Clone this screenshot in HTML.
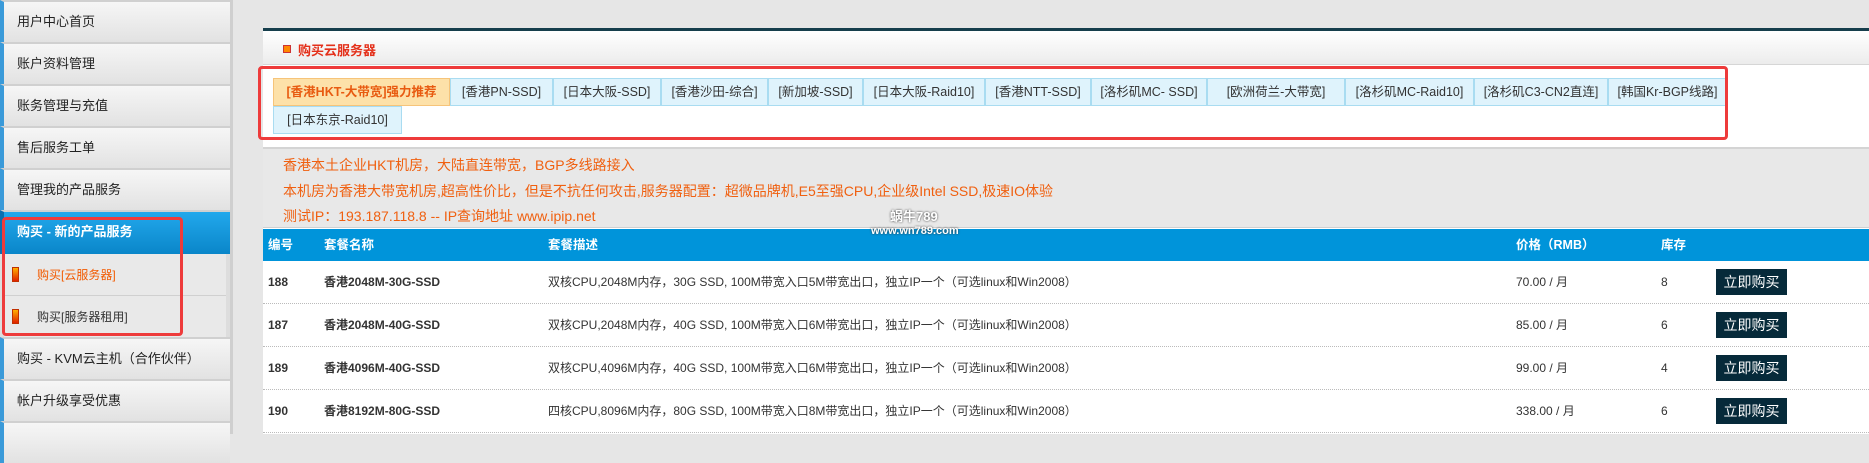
<!DOCTYPE html>
<html><head><meta charset="utf-8"><style>
*{margin:0;padding:0;box-sizing:border-box}
body{width:1869px;height:434px;overflow:hidden;background:#e6e6e6;font-family:"Liberation Sans","Noto Sans CJK SC",sans-serif;position:relative;font-size:13px;color:#333}
.side{position:absolute;left:0;top:0;width:233px;height:434px;background:#ddd;border-right:3px solid #cfcfcf}
.it{position:absolute;left:0;width:230px;height:42px;background:linear-gradient(#f6f6f6,#e2e2e2);border-top:2px solid #d0d0d0;border-left:4px solid #3a9ad9;padding-left:13px;line-height:40px;font-size:13px;color:#222}
.act{background:linear-gradient(#22a8ec,#0a86c9);color:#fff;font-weight:bold;border-left-color:#0a6fb0}
.sub{position:absolute;left:4px;width:222px;height:42px;background:#e9e9e9;border-bottom:1px solid #d0d0d0;line-height:42px;padding-left:33px;font-size:12px}
.sub i{position:absolute;left:8px;top:13px;width:7px;height:15px;background:linear-gradient(#ffb000,#e02000);border:1px solid #c03000}
.redbox{position:absolute;border:3px solid #ee3b3b;border-radius:4px}
.main{position:absolute;left:263px;top:28px;width:1606px;height:406px;background:#fff;border-top:3px solid #163e4c}
.hdr{position:absolute;left:0;top:0;width:100%;height:34px;background:linear-gradient(#fff,#ececec);border-bottom:1px solid #d6d6d6}
.hdr span{position:absolute;left:35px;top:9px;color:#e4301a;font-weight:bold;font-size:13px}
.hdr b{position:absolute;left:20px;top:14px;width:8px;height:8px;background:#f80;border:1px solid #c33}
.tab{position:absolute;height:28px;line-height:26px;background:#dff3fc;border:1px solid #a9dcf1;text-align:center;font-size:12.5px;color:#333}
.info{position:absolute;left:0;top:116px;width:100%;height:81px;background:#e8e8e8;border-top:2px solid #d4d4d4;border-bottom:1px solid #d0d0d0;color:#f06010;font-size:14px;padding-left:20px}
.info div{height:25.5px;line-height:26px}
.th{position:absolute;left:0;top:198px;width:100%;height:32px;background:#0094da;color:#fff;font-weight:bold;font-size:12.5px}
.th span,.row span{position:absolute;top:0;line-height:32px}
.row{position:absolute;left:0;width:100%;height:43px;border-bottom:1px dotted #bbb;font-size:12px}
.row span{line-height:43px}
.btn{position:absolute;left:1453px;top:8px;width:71px;height:26px;background:#062a3a;color:#fff;font-size:14px;line-height:26px;text-align:center}
</style></head><body>
<div class="side">
<div class="it" style="top:0">用户中心首页</div>
<div class="it" style="top:42px">账户资料管理</div>
<div class="it" style="top:84px">账务管理与充值</div>
<div class="it" style="top:126px">售后服务工单</div>
<div class="it" style="top:168px">管理我的产品服务</div>
<div class="it act" style="top:210px;height:44px">购买 - 新的产品服务</div>
<div class="sub" style="top:254px;color:#f25a00"><i></i>购买[云服务器]</div>
<div class="sub" style="top:296px"><i></i>购买[服务器租用]</div>
<div class="it" style="top:337px">购买 - KVM云主机（合作伙伴）</div>
<div class="it" style="top:379px">帐户升级享受优惠</div>
<div class="it" style="top:421px"></div>
</div>
<div class="redbox" style="left:2px;top:217px;width:181px;height:119px"></div>
<div class="main">
<div class="hdr"><b></b><span>购买云服务器</span></div>
<div class="tab" style="left:10px;top:47px;width:177px;background:#fde1a9;border-color:#f6c47a;color:#e85a10;font-weight:bold">[香港HKT-大带宽]强力推荐</div>
<div class="tab" style="left:187px;top:47px;width:103px">[香港PN-SSD]</div>
<div class="tab" style="left:290px;top:47px;width:108px">[日本大阪-SSD]</div>
<div class="tab" style="left:398px;top:47px;width:107px">[香港沙田-综合]</div>
<div class="tab" style="left:505px;top:47px;width:95px">[新加坡-SSD]</div>
<div class="tab" style="left:600px;top:47px;width:122px">[日本大阪-Raid10]</div>
<div class="tab" style="left:722px;top:47px;width:106px">[香港NTT-SSD]</div>
<div class="tab" style="left:828px;top:47px;width:116px">[洛杉矶MC- SSD]</div>
<div class="tab" style="left:944px;top:47px;width:138px">[欧洲荷兰-大带宽]</div>
<div class="tab" style="left:1082px;top:47px;width:129px">[洛杉矶MC-Raid10]</div>
<div class="tab" style="left:1211px;top:47px;width:134px">[洛杉矶C3-CN2直连]</div>
<div class="tab" style="left:1345px;top:47px;width:119px">[韩国Kr-BGP线路]</div>
<div class="tab" style="left:10px;top:75px;width:129px">[日本东京-Raid10]</div>
<div class="info"><div style="margin-top:3px">香港本土企业HKT机房，大陆直连带宽，BGP多线路接入</div><div>本机房为香港大带宽机房,超高性价比，但是不抗任何攻击,服务器配置：超微品牌机,E5至强CPU,企业级Intel SSD,极速IO体验</div><div>测试IP：193.187.118.8 -- IP查询地址 www.ipip.net</div></div>
<div class="th"><span style="left:5px">编号</span><span style="left:61px">套餐名称</span><span style="left:285px">套餐描述</span><span style="left:1253px">价格（RMB）</span><span style="left:1398px">库存</span></div>
<div class="row" style="top:230px"><span style="left:5px;font-weight:bold">188</span><span style="left:61px;font-weight:bold">香港2048M-30G-SSD</span><span style="left:285px">双核CPU,2048M内存，30G SSD, 100M带宽入口5M带宽出口，独立IP一个（可选linux和Win2008）</span><span style="left:1253px">70.00 / 月</span><span style="left:1398px">8</span><div class="btn">立即购买</div></div>
<div class="row" style="top:273px"><span style="left:5px;font-weight:bold">187</span><span style="left:61px;font-weight:bold">香港2048M-40G-SSD</span><span style="left:285px">双核CPU,2048M内存，40G SSD, 100M带宽入口6M带宽出口，独立IP一个（可选linux和Win2008）</span><span style="left:1253px">85.00 / 月</span><span style="left:1398px">6</span><div class="btn">立即购买</div></div>
<div class="row" style="top:316px"><span style="left:5px;font-weight:bold">189</span><span style="left:61px;font-weight:bold">香港4096M-40G-SSD</span><span style="left:285px">双核CPU,4096M内存，40G SSD, 100M带宽入口6M带宽出口，独立IP一个（可选linux和Win2008）</span><span style="left:1253px">99.00 / 月</span><span style="left:1398px">4</span><div class="btn">立即购买</div></div>
<div class="row" style="top:359px"><span style="left:5px;font-weight:bold">190</span><span style="left:61px;font-weight:bold">香港8192M-80G-SSD</span><span style="left:285px">四核CPU,8096M内存，80G SSD, 100M带宽入口8M带宽出口，独立IP一个（可选linux和Win2008）</span><span style="left:1253px">338.00 / 月</span><span style="left:1398px">6</span><div class="btn">立即购买</div></div>
<div style="position:absolute;left:627px;top:175px;color:#fff;font-size:13px;font-weight:bold;text-shadow:0 0 2px #333">蜗牛789</div>
<div style="position:absolute;left:608px;top:194px;color:#fff;font-size:11px;font-weight:bold;text-shadow:0 0 2px #333">www.wn789.com</div>
</div>
<div class="redbox" style="left:258px;top:66px;width:1470px;height:74px"></div>
</body></html>
